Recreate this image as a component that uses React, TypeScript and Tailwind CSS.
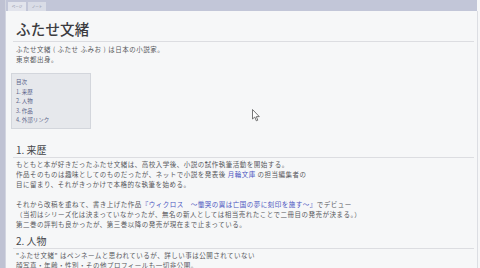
import React from "react";

const font = { fontFamily: '"Noto Sans CJK JP", "Noto Sans", sans-serif' };

export default function App() {
  return (
    <div className="relative flex w-[480px] h-[268px] overflow-hidden bg-[#f6f7f8]" style={font}>
      <div className="w-[6px] h-full shrink-0 bg-[#bfc2d3] border-r border-[#d2d5e0]" />
      <div className="flex flex-col flex-1 h-full min-w-0">
        <div className="h-[11px] shrink-0 flex items-end pl-[2px] gap-[2px] bg-[#c2c6d8] mr-[3px]">
          <div className="w-[18px] h-[9px] bg-[#e2e4ec] text-[3.5px] leading-[9px] text-[#7b8098] text-center">ページ</div>
          <div className="w-[18px] h-[9px] bg-[#d9dce6] text-[3.5px] leading-[9px] text-[#7b8098] text-center">ノート</div>
        </div>
        <div className="flex-1 min-h-0 overflow-hidden pl-[5px] pr-[3px] border-r border-[#dcdee3] mr-[2px]">
          <div className="ml-[2px] mt-[8px] pb-[2px] border-b border-[#dcdde1]">
            <h1 className="pl-[3px] text-[14.5px] leading-[20px] tracking-[0.2px] font-medium text-[#3b3b3f]">ふたせ文緒</h1>
          </div>
          <div className="mt-[2px] pl-[5px] text-[6.5px] leading-[10px] tracking-[0.5px] text-[#57585c]">
            <p>ふたせ文緒 ( ふたせ ふみお ) は日本の小説家。</p>
            <p>東京都出身。</p>
          </div>
          <div className="mt-[9px] w-[80px] bg-[#e6e8ec] border border-[#d3d6dc] pt-[4px] pb-[2px] pl-[4px] text-[5.5px] leading-[9.5px] text-[#5b648a]">
            <p>目次</p>
            <p>1. 来歴</p>
            <p>2. 人物</p>
            <p>3. 作品</p>
            <p>4. 外部リンク</p>
          </div>
          <div className="ml-[2px] mt-[15px] pb-[1px] border-b border-[#dcdde1]">
            <h2 className="pl-[3px] text-[10px] leading-[12px] text-[#45464a]">1. 来歴</h2>
          </div>
          <div className="mt-[1px] pl-[5px] text-[6.5px] leading-[10px] tracking-[0.5px] text-[#57585c] whitespace-nowrap">
            <p>もともと本が好きだったふたせ文緒は、高校入学後、小説の試作執筆活動を開始する。</p>
            <p>
              作品そのものは趣味としてのものだったが、ネットで小説を発表後 <span className="text-[#4b55c0]">月輪文庫</span> の担当編集者の
            </p>
            <p>目に留まり、それがきっかけで本格的な執筆を始める。</p>
          </div>
          <div className="mt-[10px] pl-[5px] text-[6.5px] leading-[10px] tracking-[0.5px] text-[#57585c] whitespace-nowrap">
            <p>
              それから改稿を重ねて、書き上げた作品<span className="text-[#4b55c0]">『ウィクロス　～慟哭の翼は亡国の夢に刻印を施す～』</span>でデビュー
            </p>
            <p>（当初はシリーズ化は決まっていなかったが、無名の新人としては相当売れたことで二冊目の発売が決まる。）</p>
            <p>第二巻の評判も良かったが、第三巻以降の発売が現在まで止まっている。</p>
          </div>
          <div className="ml-[2px] mt-[6px] pb-[1px] border-b border-[#dcdde1]">
            <h2 className="pl-[3px] text-[10px] leading-[12px] text-[#45464a]">2. 人物</h2>
          </div>
          <div className="mt-[1px] pl-[5px] text-[6.5px] leading-[10px] tracking-[0.5px] text-[#57585c] whitespace-nowrap">
            <p>"ふたせ文緒" はペンネームと思われているが、詳しい事は公開されていない</p>
            <p>顔写真・年齢・性別・その他プロフィールも一切非公開。</p>
          </div>
        </div>
      </div>
      <svg className="absolute left-[252px] top-[109px]" width="9" height="13" viewBox="0 0 9 13">
        <path d="M0.5 0.5 L0.5 10 L2.8 8 L4.3 11.8 L5.8 11.2 L4.3 7.6 L7.3 7.6 Z" fill="#ffffff" stroke="#555" strokeWidth="0.8" />
      </svg>
    </div>
  );
}
